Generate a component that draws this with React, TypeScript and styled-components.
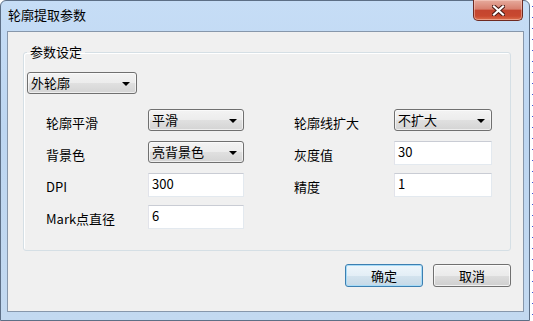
import React from "react";
import styled, { createGlobalStyle, css } from "styled-components";

const GlobalStyle = createGlobalStyle`
  html, body { margin: 0; padding: 0; background: #ffffff; }
  body { font-family: "Noto Sans CJK SC", "Noto Sans", sans-serif; font-size: 13px; color: #000; }
  * { box-sizing: border-box; }
`;

const Desktop = styled.div`
  display: flex;
  width: 533px;
  height: 321px;
  overflow: hidden;
  background: #ffffff;
`;

const Strip = styled.div`
  flex: 1;
  background-image: repeating-linear-gradient(to bottom, #3a58d8 0 1px, transparent 1px 11px);
  background-size: 1px 100%;
  background-position: 2px 6px;
  background-repeat: no-repeat;
`;

const Window = styled.div`
  width: 530px;
  height: 321px;
  display: flex;
  flex-direction: column;
  border: 1px solid #5d6f86;
  border-radius: 6px 6px 0 0;
  background: linear-gradient(to bottom, #c6ddf6 0%, #bdd6f1 40%, #c3d9f0 100%);
  padding: 0 5px 8px 6px;
`;

const TitleBar = styled.div`
  height: 30px;
  display: flex;
  align-items: flex-start;
  justify-content: space-between;
`;

const Title = styled.div`
  padding: 5px 0 0 1px;
  font-size: 13px;
  line-height: 17px;
  color: #000;
`;

const CloseButton = styled.div`
  width: 50px;
  height: 21px;
  margin-top: -1px;
  margin-right: 1px;
  display: flex;
  align-items: center;
  justify-content: center;
  border: 1px solid #6e2a22;
  border-top: none;
  border-radius: 0 0 5px 5px;
  background: linear-gradient(to bottom, #e6ab9d 0%, #d8806f 45%, #c4452f 52%, #c8482f 80%, #dc6f4c 100%);
  box-shadow: inset 0 0 0 1px rgba(255, 220, 210, 0.45);
`;

const Client = styled.div`
  flex: 1;
  display: flex;
  flex-direction: column;
  border: 1px solid #8797ab;
  background: #f0f0f0;
  padding: 12px 12px 0 15px;
`;

const GroupBox = styled.fieldset`
  margin: 0;
  border: 1px solid #d5dfe5;
  border-radius: 3px;
  padding: 12px 3px 21px;
  box-shadow: inset 1px 1px 0 #ffffff;
  min-width: 0;
`;

const Legend = styled.legend`
  padding: 0 3px;
  font-size: 13px;
  line-height: 16px;
`;

const Combo = styled.div<{ $width: number; $height: number }>`
  width: ${(p) => p.$width}px;
  height: ${(p) => p.$height}px;
  display: flex;
  align-items: center;
  justify-content: space-between;
  padding: 0 6px 0 3px;
  border: 1px solid #707070;
  border-radius: 3px;
  background: linear-gradient(to bottom, #f3f3f3 0%, #ececec 50%, #e0e0e0 51%, #d4d4d4 100%);
  box-shadow: inset 0 0 0 1px rgba(255, 255, 255, 0.6);
  font-size: 13px;
  line-height: 16px;
  align-self: start;
`;

const Arrow = styled.span`
  width: 0;
  height: 0;
  border-left: 4px solid transparent;
  border-right: 4px solid transparent;
  border-top: 4px solid #000;
  margin-top: 1px;
`;

const FieldGrid = styled.div`
  margin: 15px 0 0 19px;
  display: grid;
  grid-template-columns: 102px 96px 50px 100px 98px;
  grid-template-rows: repeat(4, 24px);
  row-gap: 8px;
`;

const Label = styled.div<{ $col: number }>`
  grid-column: ${(p) => p.$col};
  align-self: center;
  padding-top: 3px;
  font-size: 13px;
  line-height: 16px;
  white-space: nowrap;
`;

const Field = styled.input`
  width: 100%;
  height: 24px;
  margin: 0;
  border: 1px solid;
  border-color: #c9ccd4 #e3e9ef #e3e9ef #e2e3ea;
  background: #ffffff;
  padding: 0 3px 3px;
  font-family: "Noto Sans CJK SC", "Noto Sans", sans-serif;
  font-size: 13px;
  color: #000;
  outline: none;
`;

const Spacer = styled.div<{ $col: number }>`
  grid-column: ${(p) => p.$col};
`;

const ButtonRow = styled.div`
  display: flex;
  justify-content: flex-end;
  gap: 10px;
  margin-top: 13px;
`;

const DialogButton = styled.div<{ $default?: boolean }>`
  width: 78px;
  height: 23px;
  display: flex;
  align-items: center;
  justify-content: center;
  border: 1px solid #707070;
  border-radius: 3px;
  background: linear-gradient(to bottom, #f2f2f2 0%, #ebebeb 50%, #dddddd 51%, #cfcfcf 100%);
  box-shadow: inset 0 0 0 1px rgba(255, 255, 255, 0.7);
  font-size: 13px;
  line-height: 16px;
  ${(p) =>
    p.$default &&
    css`
      border-color: #3c7fb1;
      box-shadow: inset 0 0 0 1px #a7dbf7;
      background: linear-gradient(to bottom, #eef6fb 0%, #e3eef6 50%, #d3e3ee 51%, #c6d9e7 100%);
    `}
`;

const CloseGlyph = () => (
  <svg width="13" height="11" viewBox="0 0 13 11">
    <path d="M2 1.5 L11 9.5 M11 1.5 L2 9.5" stroke="#4a1a14" strokeWidth="4.2" strokeLinecap="square" />
    <path d="M2 1.5 L11 9.5 M11 1.5 L2 9.5" stroke="#ffffff" strokeWidth="2.2" strokeLinecap="square" />
  </svg>
);

export default function App() {
  return (
    <>
      <GlobalStyle />
      <Desktop>
        <Window>
          <TitleBar>
            <Title>轮廓提取参数</Title>
            <CloseButton>
              <CloseGlyph />
            </CloseButton>
          </TitleBar>
          <Client>
            <GroupBox>
              <Legend>参数设定</Legend>
              <Combo $width={110} $height={22}>
                外轮廓
                <Arrow />
              </Combo>
              <FieldGrid>
                <Label $col={1}>轮廓平滑</Label>
                <Combo $width={96} $height={22}>
                  平滑
                  <Arrow />
                </Combo>
                <Label $col={4}>轮廓线扩大</Label>
                <Combo $width={98} $height={22}>
                  不扩大
                  <Arrow />
                </Combo>

                <Label $col={1}>背景色</Label>
                <Combo $width={96} $height={22}>
                  亮背景色
                  <Arrow />
                </Combo>
                <Label $col={4}>灰度值</Label>
                <Field readOnly defaultValue="30" />

                <Label $col={1}>DPI</Label>
                <Field readOnly defaultValue="300" />
                <Label $col={4}>精度</Label>
                <Field readOnly defaultValue="1" />

                <Label $col={1}>Mark点直径</Label>
                <Field readOnly defaultValue="6" />
                <Spacer $col={4} />
              </FieldGrid>
            </GroupBox>
            <ButtonRow>
              <DialogButton $default>确定</DialogButton>
              <DialogButton>取消</DialogButton>
            </ButtonRow>
          </Client>
        </Window>
        <Strip />
      </Desktop>
    </>
  );
}
